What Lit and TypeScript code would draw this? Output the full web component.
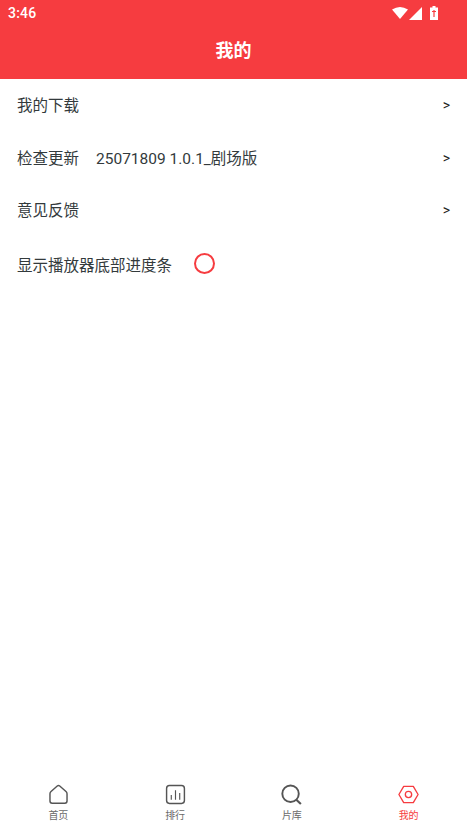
import { LitElement, html, css, svg } from "lit";
import { customElement } from "lit/decorators.js";

const icons = {
  home: svg`<path d="M10.7 3.1 L4.2 8.9 Q3.1 9.9 3.1 11.3 V18.9 Q3.1 21.2 5.4 21.2 H18.6 Q20.9 21.2 20.9 18.9 V11.3 Q20.9 9.9 19.8 8.9 L13.3 3.1 Q12 2 10.7 3.1 Z" fill="none" stroke="currentColor" stroke-width="1.5"/>`,
  chart: svg`<rect x="2.7" y="2.7" width="18.6" height="18.6" rx="3" fill="none" stroke="currentColor" stroke-width="1.5"/><path d="M7.6 12.5V17.5M12 7.5V17.5M16.4 10.5V17.5" fill="none" stroke="currentColor" stroke-width="1.2"/>`,
  search: svg`<circle cx="11" cy="11.2" r="8.6" fill="none" stroke="currentColor" stroke-width="2"/><path d="M17 17.4L21.8 22" fill="none" stroke="currentColor" stroke-width="2.2"/>`,
  me: svg`<path d="M7 3.5H17L22 12L17 20.5H7L2 12Z" fill="none" stroke="currentColor" stroke-width="1.4" stroke-linejoin="round"/><circle cx="12" cy="12" r="3.3" fill="none" stroke="currentColor" stroke-width="1.4"/>`,
};

@customElement("app-root")
export class AppRoot extends LitElement {
  static styles = css`
    :host {
      display: flex;
      flex-direction: column;
      height: 830px;
      background: #fff;
      font-family: Roboto, "Noto Sans CJK SC", sans-serif;
      overflow: hidden;
    }
    .header { background: #f63c40; color: #fff; height: 79px; flex: none; }
    .status { height: 26px; display: flex; align-items: center; padding: 0 29px 0 8px; justify-content: space-between; }
    .time { font-size: 14px; font-weight: 500; letter-spacing: 0.2px; }
    .sys { display: flex; align-items: center; gap: 1px; }
    .batt { margin-left: 7px; }
    .title { height: 49px; padding-bottom: 3px; box-sizing: border-box; display: flex; align-items: center; justify-content: center; font-size: 18px; font-weight: 700; }
    .list { flex: 1; }
    .row { height: 52.5px; box-sizing: border-box; padding: 0 17px 2px; display: flex; align-items: center; font-size: 15.5px; color: #333a3c; }
    .row.tall { height: 55px; padding-bottom: 1px; }
    .row .ver { margin-left: 17px; }
    .row .arrow { margin-left: auto; margin-top: 2px; font-size: 14px; color: #222; }
    .radio { width: 21px; height: 21px; box-sizing: border-box; border: 2px solid #f63c40; border-radius: 50%; margin-left: 22px; }
    .tabs { height: 60px; flex: none; display: grid; grid-template-columns: repeat(4, 1fr); }
    .tab { display: flex; flex-direction: column; align-items: center; padding-top: 13px; color: #6a6a6a; font-size: 10px; line-height: 14px; gap: 3px; }
    .tab.on { color: #f63c40; }
    .tab svg { width: 23px; height: 23px; display: block; color: #555; }
    .tab.on svg { color: #f63c40; }
  `;

  render() {
    const tabs = [
      ["首页", icons.home, false],
      ["排行", icons.chart, false],
      ["片库", icons.search, false],
      ["我的", icons.me, true],
    ] as const;
    return html`
      <div class="header">
        <div class="status">
          <span class="time">3:46</span>
          <span class="sys">
            <svg width="16" height="12" viewBox="0 0 16 12"><path d="M0 2.5Q8-2.5 16 2.5L8 12Z" fill="#fff"/></svg>
            <svg width="13" height="13" viewBox="0 0 13 13"><path d="M0 13L13 0V13Z" fill="#fff"/></svg>
            <svg class="batt" width="8" height="14" viewBox="0 0 8 14"><path d="M2.5 0H5.5V1.5H8V14H0V1.5H2.5Z" fill="#fff"/><path d="M4 4V11M2 5.5H6" stroke="#f63c40" stroke-width="1.2"/></svg>
          </span>
        </div>
        <div class="title">我的</div>
      </div>
      <div class="list">
        <div class="row"><span>我的下载</span><span class="arrow">&gt;</span></div>
        <div class="row"><span>检查更新</span><span class="ver">25071809 1.0.1_剧场版</span><span class="arrow">&gt;</span></div>
        <div class="row"><span>意见反馈</span><span class="arrow">&gt;</span></div>
        <div class="row tall"><span>显示播放器底部进度条</span><span class="radio"></span></div>
      </div>
      <div class="tabs">
        ${tabs.map(([label, icon, on]) => html`
          <div class="tab ${on ? "on" : ""}">
            <svg viewBox="0 0 24 24">${icon}</svg>
            <span>${label}</span>
          </div>`)}
      </div>
    `;
  }
}
